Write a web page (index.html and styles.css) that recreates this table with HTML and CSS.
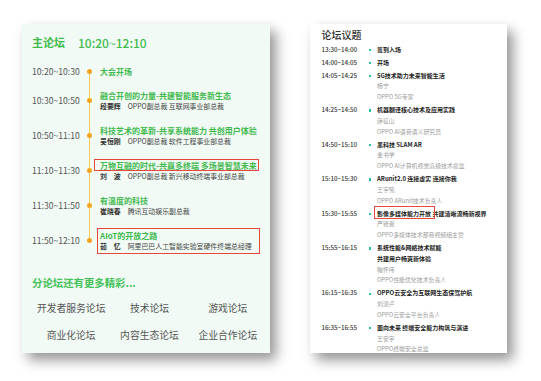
FILE: index.html
```html
<!DOCTYPE html>
<html lang="zh-CN">
<head>
<meta charset="utf-8">
<title>论坛日程</title>
<link rel="stylesheet" href="styles.css">
</head>
<body>
<div class="page">
  <section class="main">
    <h1 class="main-title"><span class="mt-name">主论坛</span><span class="mt-time">10:20~12:10</span></h1>
    <ul class="timeline">
      <li class="row">
        <span class="time">10:20~10:30</span><span class="node"></span>
        <div class="info"><p class="ttl">大会开场</p></div>
      </li>
      <li class="row">
        <span class="time">10:30~10:50</span><span class="node"></span>
        <div class="info"><p class="ttl">融合开创的力量-共建智能服务新生态</p><p class="sub"><b>段要辉</b>OPPO副总裁 互联网事业部总裁</p></div>
      </li>
      <li class="row">
        <span class="time">10:50~11:10</span><span class="node"></span>
        <div class="info"><p class="ttl">科技艺术的革新-共享系统能力 共创用户体验</p><p class="sub"><b>吴恒刚</b>OPPO副总裁 软件工程事业部总裁</p></div>
      </li>
      <li class="row">
        <span class="time">11:10~11:30</span><span class="node"></span>
        <div class="info"><p class="ttl"><span class="mark-a">万物互融的时代-共赢多终端 多场景智慧未来</span></p><p class="sub"><b>刘　波</b>OPPO副总裁 新兴移动终端事业部总裁</p></div>
      </li>
      <li class="row">
        <span class="time">11:30~11:50</span><span class="node"></span>
        <div class="info"><p class="ttl">有温度的科技</p><p class="sub"><b>崔晓春</b>腾讯互动娱乐副总裁</p></div>
      </li>
      <li class="row">
        <span class="time">11:50~12:10</span><span class="node"></span>
        <div class="info mark-b"><p class="ttl">AIoT的开放之路</p><p class="sub"><b>茹　忆</b>阿里巴巴人工智能实验室硬件终端总经理</p></div>
      </li>
    </ul>
    <p class="more">分论坛还有更多精彩...</p>
    <div class="forums">
      <span>开发者服务论坛</span><span>技术论坛</span><span>游戏论坛</span>
      <span>商业化论坛</span><span>内容生态论坛</span><span>企业合作论坛</span>
    </div>
  </section>

  <section class="agenda">
    <h2 class="ag-title">论坛议题</h2>
    <ul class="topics">
      <li class="topic"><span class="at">13:30~14:00</span><span class="bullet"></span><div class="ad"><p class="atl">签到入场</p></div></li>
      <li class="topic"><span class="at">14:00~14:05</span><span class="bullet"></span><div class="ad"><p class="atl">开场</p></div></li>
      <li class="topic"><span class="at">14:05~14:25</span><span class="bullet"></span><div class="ad"><p class="atl">5G技术助力未来智能生活</p><p class="as">杨宁</p><p class="as">OPPO 5G专家</p></div></li>
      <li class="topic"><span class="at">14:25~14:50</span><span class="bullet"></span><div class="ad"><p class="atl">机器翻译核心技术及应用实践</p><p class="as">薛征山</p><p class="as">OPPO AI语音语义研究员</p></div></li>
      <li class="topic"><span class="at">14:50~15:10</span><span class="bullet"></span><div class="ad"><p class="atl">黑科技 SLAM AR</p><p class="as">金书学</p><p class="as">OPPO AI计算机视觉高级技术总监</p></div></li>
      <li class="topic"><span class="at">15:10~15:30</span><span class="bullet"></span><div class="ad"><p class="atl">ARunit2.0 连接虚实 连接你我</p><p class="as">王宇鹭</p><p class="as">OPPO ARunit技术负责人</p></div></li>
      <li class="topic"><span class="at">15:30~15:55</span><span class="bullet"></span><div class="ad"><p class="atl"><span class="mark-c">影像多媒体能力开放</span> 共建清晰流畅新视界</p><p class="as">严锋贵</p><p class="as">OPPO多媒体技术部音视频组主管</p></div></li>
      <li class="topic"><span class="at">15:55~16:15</span><span class="bullet"></span><div class="ad"><p class="atl">系统性能&amp;网络技术赋能</p><p class="atl">共建用户畅爽新体验</p><p class="as">鞠怀伟</p><p class="as">OPPO性能优化技术负责人</p></div></li>
      <li class="topic"><span class="at">16:15~16:35</span><span class="bullet"></span><div class="ad"><p class="atl">OPPO云安全为互联网生态保驾护航</p><p class="as">刘湛卢</p><p class="as">OPPO云安全平台负责人</p></div></li>
      <li class="topic"><span class="at">16:35~16:55</span><span class="bullet"></span><div class="ad"><p class="atl">面向未来 终端安全能力构筑与演进</p><p class="as">王安宇</p><p class="as">OPPO终端安全总监</p></div></li>
    </ul>
  </section>
</div>
</body>
</html>
```

FILE: styles.css
```css
* { box-sizing: border-box; }
html, body { margin: 0; padding: 0; background: #ffffff; }
body {
  font-family: "Noto Sans CJK SC", "Noto Sans", sans-serif;
  width: 541px;
  height: 381px;
  overflow: hidden;
}
p, h1, h2, ul { margin: 0; padding: 0; }
ul { list-style: none; }

.page {
  display: flex;
  gap: 40px;
  padding: 24px 0 0 22px;
}

/* ---------- left panel ---------- */
.main {
  width: 248px;
  height: 329px;
  background: #f1faf4;
  box-shadow: 6px 7px 12px rgba(0, 0, 0, 0.42);
  padding: 11px 0 0 10px;
}
.main-title {
  display: flex;
  align-items: center;
  height: 14px;
  color: #3fba4d;
  font-weight: 700;
}
.mt-name { font-size: 11px; }
.mt-time { font-size: 12px; font-weight: 500; margin-left: 13px; }

.timeline { margin-top: 10px; }
.row {
  display: flex;
  align-items: center;
  padding: 6.5px 0;
}
.time {
  width: 52px;
  font-size: 8.6px;
  color: #555;
  line-height: 11px;
}
.node {
  align-self: stretch;
  width: 11px;
  position: relative;
  margin: -6.5px 0;
}
.node::before {
  content: "";
  position: absolute;
  left: 4.75px;
  width: 1.5px;
  top: 0;
  bottom: 0;
  background: #fbcb55;
}
.row:first-child .node::before { top: 50%; }
.row:last-child .node::before { bottom: 50%; }
.node::after {
  content: "";
  position: absolute;
  left: 3px;
  top: 50%;
  width: 5px;
  height: 5px;
  margin-top: -2.5px;
  border-radius: 50%;
  background: #f7a41c;
}
.info { margin-left: 5px; }
.ttl {
  font-size: 8px;
  line-height: 11px;
  font-weight: 700;
  color: #42b94f;
  white-space: nowrap;
}
.sub {
  font-size: 6.9px;
  line-height: 11px;
  color: #444;
  white-space: nowrap;
}
.sub b {
  display: inline-block;
  width: 27.7px;
  color: #333;
  font-weight: 700;
}
.mark-a { position: relative; }
.mark-a::after {
  content: "";
  position: absolute;
  top: -0.5px;
  bottom: -0.5px;
  left: -6px;
  right: -2px;
  border: 1.2px solid #e8473d;
}
.mark-b { position: relative; }
.mark-b::after {
  content: "";
  position: absolute;
  top: -2px;
  bottom: -2.5px;
  left: -2.7px;
  right: -8px;
  border: 1.2px solid #e8473d;
}

.more {
  margin-top: 17.5px;
  font-size: 10.4px;
  line-height: 14px;
  font-weight: 700;
  color: #45c15a;
}
.forums {
  margin-top: 11.5px;
  width: 235px;
  display: grid;
  grid-template-columns: repeat(3, 1fr);
  row-gap: 12.7px;
  font-size: 9.8px;
  line-height: 14px;
  color: #555;
  text-align: center;
}

/* ---------- right panel ---------- */
.agenda {
  width: 197px;
  height: 329px;
  background: #ffffff;
  box-shadow: 6px 7px 12px rgba(0, 0, 0, 0.42);
  padding: 4px 0 0 11.5px;
  overflow: hidden;
}
.ag-title {
  font-size: 10px;
  line-height: 14px;
  font-weight: 500;
  color: #333;
}
.topics { margin-top: 2.9px; }
.topic {
  display: flex;
  align-items: flex-start;
  margin-bottom: 2.1px;
}
.at {
  width: 43px;
  font-size: 6.2px;
  line-height: 10.8px;
  font-weight: 500;
  color: #333;
  white-space: nowrap;
}
.bullet {
  width: 11px;
  height: 10.8px;
  position: relative;
}
.bullet::after {
  content: "";
  position: absolute;
  left: 4.5px;
  top: 4.3px;
  width: 2.2px;
  height: 2.2px;
  background: #22bfa0;
}
.ad { margin-left: 1.5px; }
.atl {
  font-size: 6px;
  line-height: 10.8px;
  font-weight: 700;
  color: #222;
  white-space: nowrap;
}
.as {
  font-size: 5.9px;
  line-height: 10.8px;
  color: #9c9c9c;
  white-space: nowrap;
}
.mark-c { position: relative; }
.mark-c::after {
  content: "";
  position: absolute;
  top: -3px;
  bottom: -1.5px;
  left: -3.4px;
  right: -3.5px;
  border: 1.2px solid #e8473d;
}
```
